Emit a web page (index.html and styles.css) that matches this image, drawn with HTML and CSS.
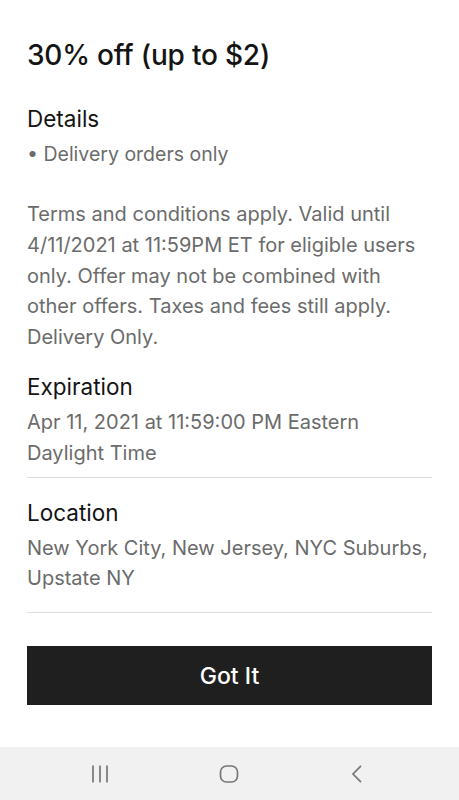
FILE: index.html
```html
<!DOCTYPE html>
<html>
<head>
<meta charset="utf-8">
<link rel="stylesheet" href="styles.css">
</head>
<body>
<div class="screen">
  <main class="sheet">
    <h1 class="title">30% off (up to $2)</h1>
    <section class="details">
      <h2 class="heading">Details</h2>
      <p class="bullet">• Delivery orders only</p>
      <p class="terms">Terms and conditions apply. Valid until 4/11/2021 at 11:59PM ET for eligible users only. Offer may not be combined with other offers. Taxes and fees still apply. Delivery Only.</p>
    </section>
    <section class="block">
      <h2 class="heading">Expiration</h2>
      <p class="body">Apr 11, 2021 at 11:59:00 PM Eastern Daylight Time</p>
    </section>
    <section class="block">
      <h2 class="heading">Location</h2>
      <p class="body">New York City, New Jersey, NYC Suburbs, Upstate NY</p>
    </section>
    <button class="cta">Got It</button>
  </main>
  <nav class="navbar">
    <svg class="nav-icon" width="20" height="20" viewBox="0 0 20 20"><path d="M3 1.5v17M10 1.5v17M17 1.5v17" stroke="#777" stroke-width="1.7" fill="none"/></svg>
    <svg class="nav-icon" width="20" height="20" viewBox="0 0 20 20"><rect x="1.5" y="2" width="17" height="16" rx="6" stroke="#777" stroke-width="1.7" fill="none"/></svg>
    <svg class="nav-icon" width="20" height="20" viewBox="0 0 20 20"><path d="M14 1.8L6 10L14 18.2" stroke="#777" stroke-width="1.7" fill="none"/></svg>
  </nav>
</div>
</body>
</html>
```
FILE: styles.css
```css
* { box-sizing: border-box; }
html, body { margin: 0; padding: 0; background: #fff; }
body { font-family: Inter, "Noto Sans", sans-serif; }
.screen { width: 459px; height: 800px; display: flex; flex-direction: column; }
.sheet { flex: 1; display: flex; flex-direction: column; padding: 37px 27px 0; }
.title { margin: 0; font-size: 28px; font-weight: 500; color: #141414; line-height: 36px; letter-spacing: -0.2px; }
.heading { margin: 0; font-size: 22.5px; font-weight: 400; color: #141414; line-height: 30px; }
.details { margin-top: 31px; }
.bullet { margin: 5px 0 0; font-size: 19.5px; color: #6b6b6b; line-height: 30px; }
.terms { margin: 30px 0 0; font-size: 20px; color: #6b6b6b; line-height: 30.8px; }
.body { margin: 5px 0 0; font-size: 20px; color: #6b6b6b; line-height: 30.8px; }
.block { border-bottom: 1px solid #dcdcdc; padding-bottom: 8px; }
.details + .block { margin-top: 19px; }
.block + .block { margin-top: 20px; padding-bottom: 18px; }
.cta { margin-top: 33px; height: 59px; border: none; background: #1f1f1f; color: #fff; font-family: Inter, "Noto Sans", sans-serif; font-size: 23px; font-weight: 500; }
.navbar { height: 53px; background: #f1f1f1; display: flex; align-items: center; justify-content: space-between; padding: 0 92px 0 90px; }
```
